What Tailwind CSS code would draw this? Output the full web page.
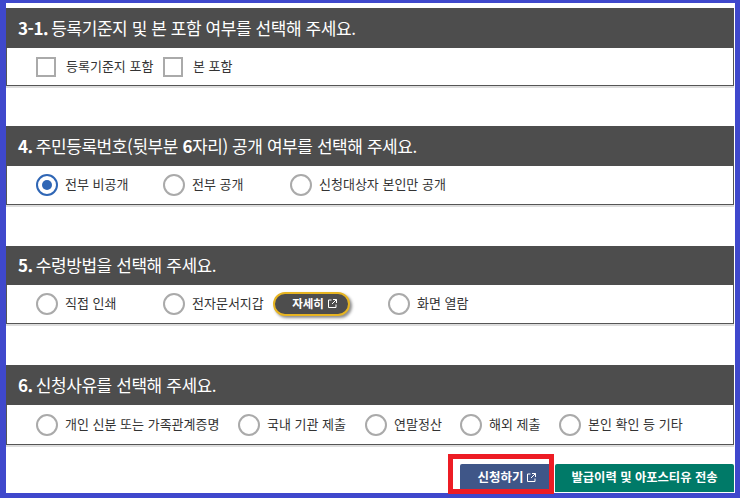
<!DOCTYPE html>
<html lang="ko">
<head>
    <meta charset="UTF-8">
    <title>신청</title>
    <script src="https://cdn.jsdelivr.net/npm/@tailwindcss/browser@4"></script>
</head>
<body class="bg-white font-['Noto_Sans_CJK_KR','Noto_Sans',sans-serif] overflow-hidden">
    <div class="relative w-[740px] h-[498px] border-t-[3px] border-l-[6px] border-r-[5px] border-b-[5px] border-[#3f48cc] bg-white pt-[5px] pr-[1px]">

        <!-- 3-1 -->
        <section class="mb-[40px]">
            <h2 class="h-[40px] bg-[#4d4d4d] text-white text-[17px] font-normal pl-[12px] pb-[1px] flex items-center tracking-[-0.42px]"><span><b class="font-bold mr-[3px]">3-1.</b>등록기준지 및 본 포함 여부를 선택해 주세요.</span></h2>
            <div class="h-[38px] bg-white border border-t-0 border-[#555] shadow-[0_2px_0_#dddddd] flex items-center pl-[29px] text-[13px] text-[#333]">
                <span class="w-[20px] h-[20px] border-2 border-[#aaaaaa]"></span>
                <span class="ml-[10px] w-[97px] pb-[2px]">등록기준지 포함</span>
                <span class="w-[20px] h-[20px] border-2 border-[#aaaaaa]"></span>
                <span class="ml-[10px] pb-[2px]">본 포함</span>
            </div>
        </section>

        <!-- 4 -->
        <section class="mb-[41px]">
            <h2 class="h-[40px] bg-[#4d4d4d] text-white text-[17px] font-normal pl-[12px] pb-[1px] flex items-center tracking-[-0.42px]"><span><b class="font-bold mr-[3px]">4.</b>주민등록번호(뒷부분 <b class="font-bold">6</b>자리) 공개 여부를 선택해 주세요.</span></h2>
            <div class="h-[39px] bg-white border border-t-0 border-[#555] shadow-[0_2px_0_#dddddd] flex items-center pl-[29px] text-[13px] text-[#333]">
                <span class="w-[22px] h-[22px] rounded-full border-2 border-[#2f66b5] flex items-center justify-center shrink-0"><span class="w-[10px] h-[10px] rounded-full bg-[#2f66b5]"></span></span>
                <span class="ml-[7px] w-[98px] pb-[2px]">전부 비공개</span>
                <span class="w-[22px] h-[22px] rounded-full border-2 border-[#aaaaaa] shrink-0"></span>
                <span class="ml-[7px] w-[98px] pb-[2px]">전부 공개</span>
                <span class="w-[22px] h-[22px] rounded-full border-2 border-[#aaaaaa] shrink-0"></span>
                <span class="ml-[7px] pb-[2px]">신청대상자 본인만 공개</span>
            </div>
        </section>

        <!-- 5 -->
        <section class="mb-[41px]">
            <h2 class="h-[39px] bg-[#4d4d4d] text-white text-[17px] font-normal pl-[12px] pb-[1px] flex items-center tracking-[-0.42px]"><span><b class="font-bold mr-[3px]">5.</b>수령방법을 선택해 주세요.</span></h2>
            <div class="h-[39px] bg-white border border-t-0 border-[#555] shadow-[0_2px_0_#dddddd] flex items-center pl-[29px] text-[13px] text-[#333]">
                <span class="w-[22px] h-[22px] rounded-full border-2 border-[#aaaaaa] shrink-0"></span>
                <span class="ml-[7px] w-[98px] pb-[2px]">직접 인쇄</span>
                <span class="w-[22px] h-[22px] rounded-full border-2 border-[#aaaaaa] shrink-0"></span>
                <span class="ml-[7px] w-[81px] pb-[2px]">전자문서지갑</span>
                <a class="w-[77px] h-[24px] rounded-full bg-[#4d4d4d] border-2 border-[#e6b422] shadow-[2px_2px_3px_rgba(0,0,0,0.45)] flex items-center justify-center gap-[4px] text-white text-[11.5px] font-bold pl-[6px] pb-[1px]">자세히
                    <svg class="w-[9px] h-[9px]" viewBox="0 0 9 9" fill="none" stroke="#ffffff" stroke-width="1"><path d="M3.5 1H.5v7.5H8V5.5"/><path d="M5 .5h3.5V4M8.5.5 4 5"/></svg>
                </a>
                <span class="ml-[38px] w-[22px] h-[22px] rounded-full border-2 border-[#aaaaaa] shrink-0"></span>
                <span class="ml-[7px] pb-[2px]">화면 열람</span>
            </div>
        </section>

        <!-- 6 -->
        <section>
            <h2 class="h-[40px] bg-[#4d4d4d] text-white text-[17px] font-normal pl-[12px] pb-[1px] flex items-center tracking-[-0.42px]"><span><b class="font-bold mr-[3px]">6.</b>신청사유를 선택해 주세요.</span></h2>
            <div class="h-[40px] bg-white border border-t-0 border-[#555] shadow-[0_2px_0_#dddddd] flex items-center pl-[29px] text-[13px] text-[#333]">
                <span class="w-[22px] h-[22px] rounded-full border-2 border-[#aaaaaa] shrink-0"></span>
                <span class="ml-[7px] w-[173px] pb-[2px] whitespace-nowrap">개인 신분 또는 가족관계증명</span>
                <span class="w-[22px] h-[22px] rounded-full border-2 border-[#aaaaaa] shrink-0"></span>
                <span class="ml-[7px] w-[98px] pb-[2px] whitespace-nowrap">국내 기관 제출</span>
                <span class="w-[22px] h-[22px] rounded-full border-2 border-[#aaaaaa] shrink-0"></span>
                <span class="ml-[7px] w-[66px] pb-[2px] whitespace-nowrap">연말정산</span>
                <span class="w-[22px] h-[22px] rounded-full border-2 border-[#aaaaaa] shrink-0"></span>
                <span class="ml-[7px] w-[70px] pb-[2px] whitespace-nowrap">해외 제출</span>
                <span class="w-[22px] h-[22px] rounded-full border-2 border-[#aaaaaa] shrink-0"></span>
                <span class="ml-[7px] pb-[2px] whitespace-nowrap">본인 확인 등 기타</span>
            </div>
        </section>

        <div class="flex justify-end gap-[2px] mt-[19px]">
            <button class="w-[93px] h-[28px] bg-[#3f5688] rounded-t-[2px] text-white text-[12.5px] font-bold flex items-center justify-center gap-[3px] pb-[2px]">신청하기
                <svg class="w-[9px] h-[9px]" viewBox="0 0 9 9" fill="none" stroke="#ffffff" stroke-width="1"><path d="M3.5 1H.5v7.5H8V5.5"/><path d="M5 .5h3.5V4M8.5.5 4 5"/></svg>
            </button>
            <button class="w-[179px] h-[28px] bg-[#007a68] rounded-t-[2px] text-white text-[12.3px] font-bold flex items-center justify-center pb-[2px] whitespace-nowrap">발급이력 및 아포스티유 전송</button>
        </div>

        <!-- red highlight drawn over the screenshot -->
        <div class="absolute left-[442px] top-[451px] w-[106px] h-[40px] border-[5px] border-[#ed1c24]"></div>
    </div>
</body>
</html>
